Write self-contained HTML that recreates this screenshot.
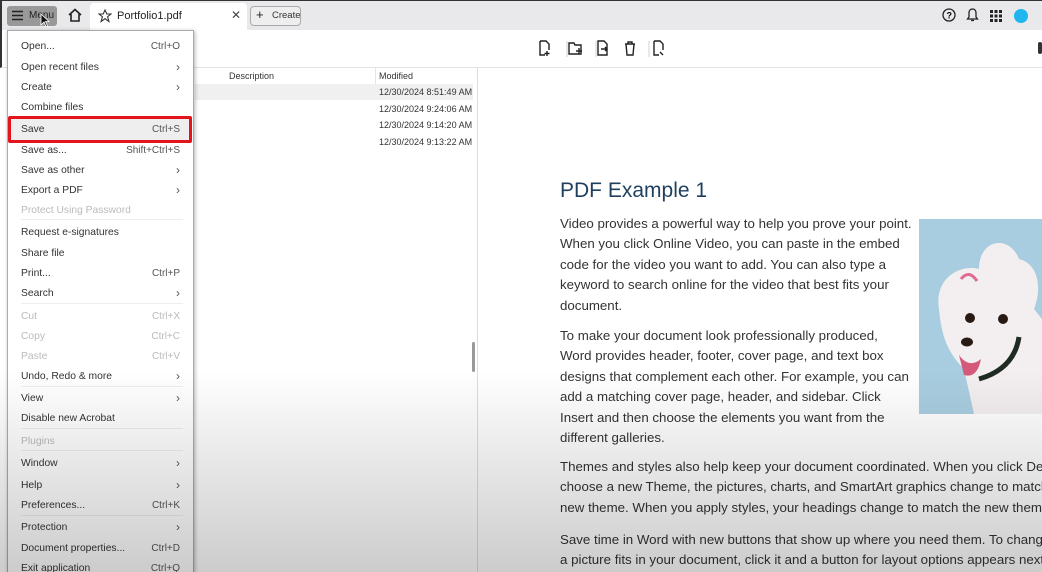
<!DOCTYPE html>
<html style="overflow:hidden"><head><meta charset="utf-8"><style>
*{margin:0;padding:0;box-sizing:border-box}
html,body{width:1042px;height:572px;overflow:hidden}
body{position:relative;background:#fff;font-family:"Liberation Sans",sans-serif;color:#2c2c2c}
.abs{position:absolute}
#top{left:0;top:0;width:1042px;height:30px;background:#e9e8eb;border-top:1px solid #333;border-left:2px solid #333}
#tb{left:0;top:30px;width:1042px;height:38px;border-bottom:1px solid #e2e2e2;border-left:2px solid #333}
.t{position:absolute;white-space:nowrap}
#menu{left:7px;top:30px;width:187px;height:542px;background:#fff;border:1px solid #aaa;border-bottom:none;box-shadow:1px 1px 4px rgba(0,0,0,.3);overflow:hidden}
.mi{position:absolute;left:13px;font-size:10.3px;color:#333;white-space:nowrap}
.sc{position:absolute;right:13px;font-size:10px;color:#555}
.dis{color:#bbb}
.sep{position:absolute;left:13px;width:162px;height:1px;background:#eee}
#doc{left:478px;top:68px;width:564px;height:504px;overflow:hidden}
.p{position:absolute;left:82px;font-size:13.3px;line-height:20.4px;color:#333;white-space:nowrap}
#ov{left:0;top:0;width:1042px;height:572px;pointer-events:none;background:linear-gradient(to bottom,rgba(0,0,0,0) 0,rgba(0,0,0,0) 370px,rgba(0,0,0,.2) 572px)}
</style></head><body>
<div id="top" class="abs"></div>
<div class="abs" style="left:7px;top:6px;width:50px;height:20px;background:#999;border-radius:3px"></div>
<svg class="abs" style="left:12px;top:10px" width="12" height="11"><path d="M0 1.5H11M0 5.5H11M0 9.5H11" stroke="#222" stroke-width="1.5"/></svg>
<div class="t" style="left:29px;top:10px;font-size:10px;color:#222">Menu</div>
<svg class="abs" style="left:67px;top:8px" width="16" height="15"><path d="M2 7L8 1.5L14 7M4 6V13H12V6" fill="none" stroke="#222" stroke-width="1.6"/></svg>
<div class="abs" style="left:90px;top:3px;width:157px;height:27px;background:#fff;border-radius:4px 4px 0 0"></div>
<svg class="abs" style="left:98px;top:9px" width="14" height="14"><path d="M7 1L8.8 5H13L9.6 7.7L10.9 12.5L7 9.7L3.1 12.5L4.4 7.7L1 5H5.2Z" fill="none" stroke="#333" stroke-width="1.1"/></svg>
<div class="t" style="left:117px;top:10px;font-size:11px;color:#222">Portfolio1.pdf</div>
<div class="t" style="left:231px;top:8px;font-size:12px;color:#444">✕</div>
<div class="abs" style="left:250px;top:6px;width:51px;height:20px;border:1px solid #aaa;border-radius:4px;background:#eee"></div>
<div class="t" style="left:256px;top:7px;font-size:13px;color:#222">+</div>
<div class="t" style="left:272px;top:10px;font-size:9.5px;color:#333">Create</div>
<svg class="abs" style="left:942px;top:8px" width="14" height="14"><circle cx="7" cy="7" r="6" fill="none" stroke="#222" stroke-width="1.3"/><text x="4.5" y="10.5" font-size="9" font-family="Liberation Sans" font-weight="bold">?</text></svg>
<svg class="abs" style="left:966px;top:8px" width="13" height="15"><path d="M6.5 1C4 1 3 3 3 5V9L1.5 11H11.5L10 9V5C10 3 9 1 6.5 1ZM5 12.5H8" fill="none" stroke="#222" stroke-width="1.3"/></svg>
<svg class="abs" style="left:990px;top:10px" width="12" height="12"><g fill="#222"><rect x="0" y="0" width="3" height="3"/><rect x="4.5" y="0" width="3" height="3"/><rect x="9" y="0" width="3" height="3"/><rect x="0" y="4.5" width="3" height="3"/><rect x="4.5" y="4.5" width="3" height="3"/><rect x="9" y="4.5" width="3" height="3"/><rect x="0" y="9" width="3" height="3"/><rect x="4.5" y="9" width="3" height="3"/><rect x="9" y="9" width="3" height="3"/></g></svg>
<div class="abs" style="left:1014px;top:9px;width:14px;height:14px;border-radius:50%;background:#1fb6f0"></div>

<div id="tb" class="abs"></div>
<svg class="abs" style="left:538px;top:40px" width="130" height="18" fill="none" stroke="#222" stroke-width="1.4">
<path d="M2 1H8L11 4V10M2 1V15H7M9 11V16M6.5 13.5H11.5"/>
<path d="M29 1V17" stroke="#ddd"/>
<path d="M31 3H36L37 5H43V14H31ZM38 11H44M41 8V14"/>
<path d="M58 1V17" stroke="#ddd"/>
<path d="M60 1H66L69 4V15H60ZM63 9H69M67 7L69 9L67 11"/>
<path d="M87 4H97M90 4V2H94V4M88 4L89 15H95L96 4"/>
<path d="M111 1V17" stroke="#ddd"/>
<path d="M116 1H122L125 4V10M116 1V15H121M122 12L125 15"/>
</svg>
<div class="abs" style="left:1038px;top:42px;width:4px;height:12px;background:#333;border-radius:2px"></div>

<div class="abs" style="left:477px;top:68px;width:1px;height:504px;background:#ddd"></div>
<div class="t" style="left:229px;top:71px;font-size:9px;color:#333">Description</div>
<div class="abs" style="left:375px;top:68px;width:1px;height:16px;background:#e5e5e5"></div>
<div class="t" style="left:379px;top:71px;font-size:9px;color:#333">Modified</div>
<div class="abs" style="left:195px;top:84px;width:278px;height:16px;background:#f0f0f0"></div>
<div class="t" style="left:379px;top:87px;font-size:9px;color:#333">12/30/2024 8:51:49 AM</div>
<div class="t" style="left:379px;top:104px;font-size:9px;color:#333">12/30/2024 9:24:06 AM</div>
<div class="t" style="left:379px;top:120px;font-size:9px;color:#333">12/30/2024 9:14:20 AM</div>
<div class="t" style="left:379px;top:137px;font-size:9px;color:#333">12/30/2024 9:13:22 AM</div>
<div class="abs" style="left:472px;top:342px;width:3px;height:30px;background:#999;border-radius:2px"></div>

<div id="doc" class="abs">
<div class="t" style="left:82px;top:111px;font-size:21px;color:#1f3f5e">PDF Example 1</div>
<div class="p" style="top:146px">Video provides a powerful way to help you prove your point.<br>When you click Online Video, you can paste in the embed<br>code for the video you want to add. You can also type a<br>keyword to search online for the video that best fits your<br>document.</div>
<div class="p" style="top:258px">To make your document look professionally produced,<br>Word provides header, footer, cover page, and text box<br>designs that complement each other. For example, you can<br>add a matching cover page, header, and sidebar. Click<br>Insert and then choose the elements you want from the<br>different galleries.</div>
<div class="p" style="top:389px">Themes and styles also help keep your document coordinated. When you click Design and<br>choose a new Theme, the pictures, charts, and SmartArt graphics change to match your<br>new theme. When you apply styles, your headings change to match the new theme.</div>
<div class="p" style="top:462px">Save time in Word with new buttons that show up where you need them. To change the way<br>a picture fits in your document, click it and a button for layout options appears next to it.</div>
<svg class="abs" style="left:441px;top:151px" width="123" height="195">
<rect width="123" height="195" fill="#a9cde0"/>
<path d="M20 90C15 60 40 45 60 50C60 20 90 15 100 40C120 45 123 70 115 90L123 100V195H55L45 150C25 130 22 110 20 90Z" fill="#f3eff0"/>
<circle cx="51" cy="99" r="5" fill="#2a1a14"/><circle cx="84" cy="100" r="5" fill="#2a1a14"/>
<ellipse cx="48" cy="123" rx="6" ry="4.5" fill="#2a1a14"/>
<path d="M40 136Q50 150 62 140Q58 160 45 156Z" fill="#d35a7a"/>
<path d="M100 118Q95 150 60 160" stroke="#1f2a22" stroke-width="5" fill="none"/>
<path d="M42 60Q50 50 58 62" stroke="#e06a90" stroke-width="3" fill="none"/>
</svg>
</div>

<div id="menu" class="abs">
<div class="mi" style="top:10px">Open...</div><div class="sc" style="top:10px">Ctrl+O</div>
<div class="mi" style="top:31px">Open recent files</div><div class="sc" style="top:29px;font-size:12px">›</div>
<div class="mi" style="top:51px">Create</div><div class="sc" style="top:49px;font-size:12px">›</div>
<div class="mi" style="top:71px">Combine files</div>
<div class="abs" style="left:2px;top:88px;width:181px;height:22px;background:#eee"></div>
<div class="mi" style="top:93px">Save</div><div class="sc" style="top:93px">Ctrl+S</div>
<div class="mi" style="top:114px">Save as...</div><div class="sc" style="top:114px">Shift+Ctrl+S</div>
<div class="mi" style="top:134px">Save as other</div><div class="sc" style="top:132px;font-size:12px">›</div>
<div class="mi" style="top:154px">Export a PDF</div><div class="sc" style="top:152px;font-size:12px">›</div>
<div class="mi dis" style="top:174px">Protect Using Password</div>
<div class="sep" style="top:188px"></div>
<div class="mi" style="top:196px">Request e-signatures</div>
<div class="mi" style="top:217px">Share file</div>
<div class="mi" style="top:237px">Print...</div><div class="sc" style="top:237px">Ctrl+P</div>
<div class="mi" style="top:257px">Search</div><div class="sc" style="top:255px;font-size:12px">›</div>
<div class="sep" style="top:272px"></div>
<div class="mi dis" style="top:280px">Cut</div><div class="sc dis" style="top:280px">Ctrl+X</div>
<div class="mi dis" style="top:300px">Copy</div><div class="sc dis" style="top:300px">Ctrl+C</div>
<div class="mi dis" style="top:320px">Paste</div><div class="sc dis" style="top:320px">Ctrl+V</div>
<div class="mi" style="top:340px">Undo, Redo &amp; more</div><div class="sc" style="top:338px;font-size:12px">›</div>
<div class="sep" style="top:355px"></div>
<div class="mi" style="top:362px">View</div><div class="sc" style="top:360px;font-size:12px">›</div>
<div class="mi" style="top:382px">Disable new Acrobat</div>
<div class="sep" style="top:397px"></div>
<div class="mi dis" style="top:405px">Plugins</div>
<div class="sep" style="top:419px"></div>
<div class="mi" style="top:427px">Window</div><div class="sc" style="top:425px;font-size:12px">›</div>
<div class="mi" style="top:449px">Help</div><div class="sc" style="top:447px;font-size:12px">›</div>
<div class="mi" style="top:469px">Preferences...</div><div class="sc" style="top:469px">Ctrl+K</div>
<div class="sep" style="top:484px"></div>
<div class="mi" style="top:491px">Protection</div><div class="sc" style="top:489px;font-size:12px">›</div>
<div class="mi" style="top:512px">Document properties...</div><div class="sc" style="top:512px">Ctrl+D</div>
<div class="mi" style="top:532px">Exit application</div><div class="sc" style="top:532px">Ctrl+Q</div>
</div>
<div class="abs" style="left:8px;top:116px;width:184px;height:27px;border:3px solid #e3141c;border-radius:2px"></div>
<svg class="abs" style="left:40px;top:13px" width="10" height="15"><path d="M1 1V12L4 9L6 13.5L7.5 13L5.5 8.5H9Z" fill="#111" stroke="#fff" stroke-width="0.8"/></svg>
<div id="ov" class="abs"></div>
</body></html>
